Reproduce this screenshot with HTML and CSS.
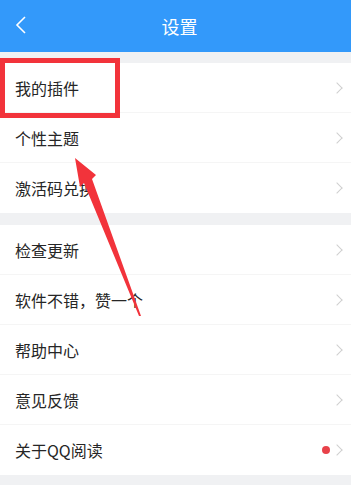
FILE: index.html
```html
<!DOCTYPE html>
<html lang="zh-CN">
<head>
    <meta charset="UTF-8">
    <title>设置</title>
    <link rel="stylesheet" href="styles.css">
</head>
<body>
    <div class="page">
        <div class="header">
            <svg class="back" width="12" height="18" viewBox="0 0 12 18">
                <polyline points="10,1 2,9 10,17" fill="none" stroke="#fff" stroke-width="1.6"/>
            </svg>
            <div class="title">设置</div>
        </div>

        <div class="group">
            <div class="row"><span class="label">我的插件</span><span class="chev"></span></div>
            <div class="row"><span class="label">个性主题</span><span class="chev"></span></div>
            <div class="row"><span class="label">激活码兑换</span><span class="chev"></span></div>
        </div>

        <div class="group">
            <div class="row"><span class="label">检查更新</span><span class="chev"></span></div>
            <div class="row"><span class="label">软件不错，赞一个</span><span class="chev"></span></div>
            <div class="row"><span class="label">帮助中心</span><span class="chev"></span></div>
            <div class="row"><span class="label">意见反馈</span><span class="chev"></span></div>
            <div class="row"><span class="label">关于QQ阅读</span><span class="dot"></span><span class="chev"></span></div>
        </div>

        <!-- 标注 -->
        <div class="mark"></div>
        <svg class="arrow" width="351" height="485" viewBox="0 0 351 485">
            <polygon points="75,158 96,175 92,179 141,316 139,316 84,183 80,187" fill="#f2333b"/>
        </svg>
    </div>
</body>
</html>
```

FILE: styles.css
```css
body {
    margin: 0;
    font-family: "Noto Sans CJK SC", "Noto Sans", sans-serif;
    background: #f0f1f3;
}

.page {
    position: relative;
    width: 351px;
    height: 485px;
    overflow: hidden;
}

.header {
    height: 52px;
    background: #3399fa;
    display: flex;
    align-items: center;
    justify-content: center;
    position: relative;
}

.back {
    position: absolute;
    left: 15px;
    top: 16px;
}

.title {
    color: #fff;
    font-size: 18px;
    margin-left: 8px;
}

.group {
    background: #fff;
    margin-top: 11px;
}

.group + .group {
    margin-top: 12px;
}

.row {
    height: 50px;
    display: flex;
    align-items: center;
    padding: 0 10px 0 15px;
    border-bottom: 1px solid #f5f5f5;
    box-sizing: border-box;
}

.row:last-child {
    border-bottom: none;
}

.label {
    flex: 1;
    font-size: 16px;
    color: #262626;
}

.chev {
    width: 7px;
    height: 7px;
    border-top: 1px solid #cfcfcf;
    border-right: 1px solid #cfcfcf;
    transform: rotate(45deg);
}

.dot {
    width: 8px;
    height: 8px;
    border-radius: 50%;
    background: #e8424a;
    margin-right: 3px;
}

.mark {
    position: absolute;
    left: 0;
    top: 58px;
    width: 110px;
    height: 50px;
    border: 5px solid #f2333b;
}

.arrow {
    position: absolute;
    left: 0;
    top: 0;
    pointer-events: none;
}
```
